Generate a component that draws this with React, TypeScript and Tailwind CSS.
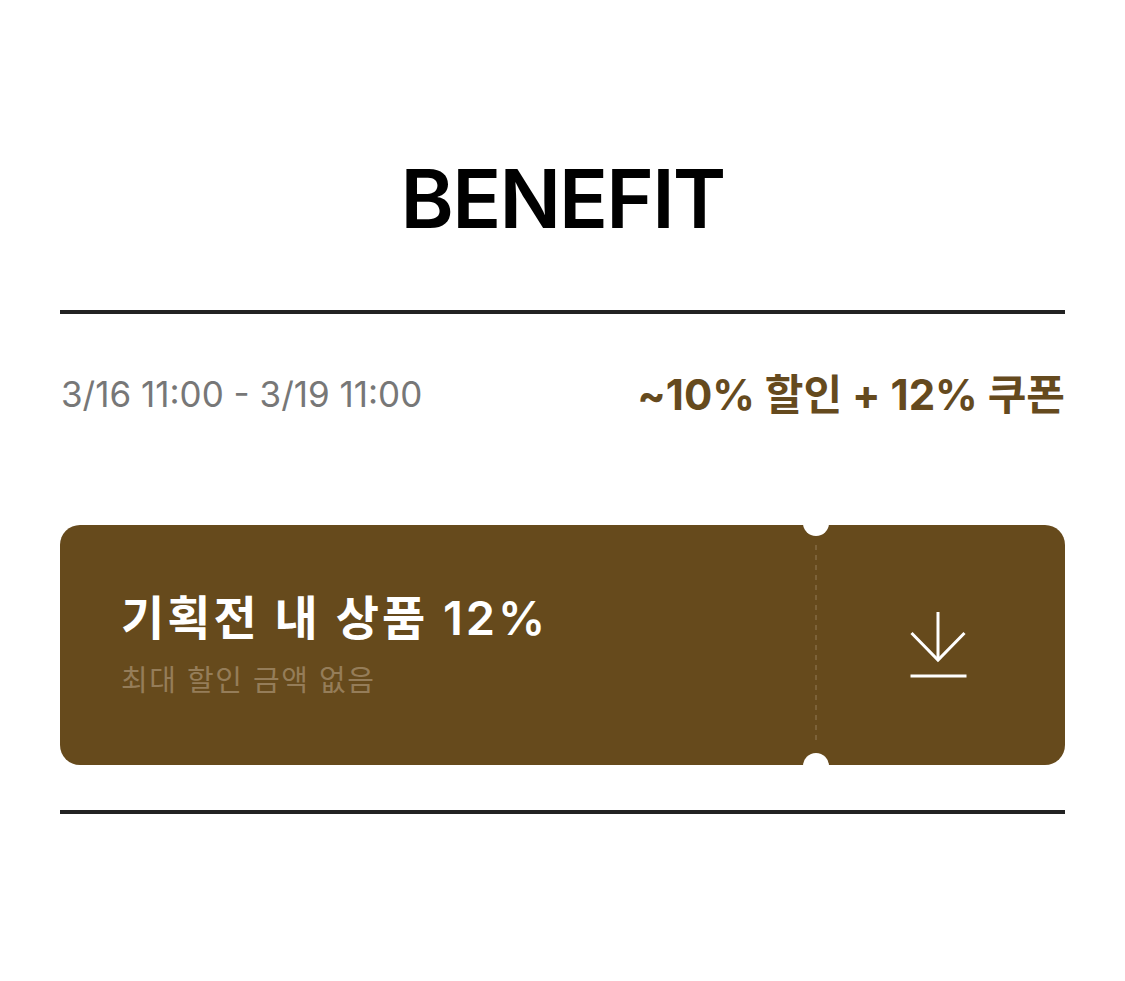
import React from "react";

const sans = "Inter, 'Noto Sans CJK KR', 'Noto Sans', sans-serif";

export default function App() {
  return (
    <div className="w-[1125px] h-[981px] bg-white" style={{ fontFamily: sans }}>
      <div className="px-[60px] pt-[151px]">
        <h1 className="text-center text-[81px] leading-[96px] font-semibold tracking-[-1.8px] text-black">BENEFIT</h1>
        <div className="mt-[63px] h-[4px] bg-[#222222]" />
        <div className="mt-[58px] flex items-center justify-between h-[44px]">
          <span className="text-[35px] text-[#777777] pl-[1px]">3/16 11:00 - 3/19 11:00</span>
          <span className="text-[42px] font-bold text-[#654a1e] tracking-[0px]">~10% 할인 + 12% 쿠폰</span>
        </div>
        <div className="mt-[109px] relative h-[240px] rounded-[20px] bg-[#664a1c] flex">
          <div className="flex-1 flex flex-col justify-center pl-[61px]">
            <div className="text-[47px] leading-[56px] font-semibold text-white tracking-[3px]">기획전 내 상품 12%</div>
            <div className="mt-[16px] text-[29px] leading-[38px] text-[#957d59] tracking-[1.5px]">최대 할인 금액 없음</div>
          </div>
          <div className="relative w-[249px] flex items-center justify-center">
            <svg className="absolute left-[-1px] top-[20px]" width="2" height="200" viewBox="0 0 2 200">
              <line x1="1" y1="0" x2="1" y2="200" stroke="#7c6239" strokeWidth="2" strokeDasharray="5 5" />
            </svg>
            <svg width="60" height="70" viewBox="0 0 60 70" className="ml-[-4px]">
              <path d="M29 2V50" stroke="white" strokeWidth="3" fill="none" />
              <path d="M2.5 23L29 50L55.5 23" stroke="white" strokeWidth="3" fill="none" />
              <path d="M1.5 66H57.5" stroke="white" strokeWidth="3" fill="none" />
            </svg>
            <div className="absolute left-[-13px] top-[-15px] w-[26px] h-[26px] rounded-full bg-white" />
            <div className="absolute left-[-13px] bottom-[-14px] w-[26px] h-[26px] rounded-full bg-white" />
          </div>
        </div>
        <div className="mt-[45px] h-[4px] bg-[#222222]" />
      </div>
    </div>
  );
}
